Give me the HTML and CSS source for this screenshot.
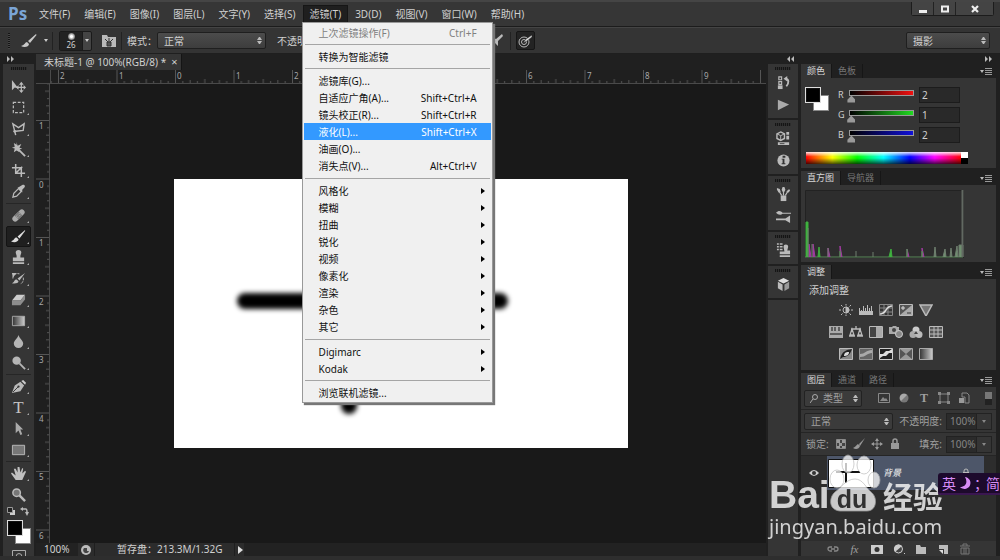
FILE: index.html
```html
<!DOCTYPE html>
<html lang="zh-CN">
<head>
<meta charset="utf-8">
<title>未标题-1 @ 100%(RGB/8)</title>
<link rel="stylesheet" href="styles.css">
</head>
<body>
<div class="app">
  <header class="menubar">
    <span class="logo">Ps</span>
    <nav class="menus">
      <button class="menu-btn">文件(F)</button>
      <button class="menu-btn">编辑(E)</button>
      <button class="menu-btn">图像(I)</button>
      <button class="menu-btn">图层(L)</button>
      <button class="menu-btn">文字(Y)</button>
      <button class="menu-btn">选择(S)</button>
      <div class="menu-anchor">
        <button class="menu-btn open">滤镜(T)</button>
        <div class="menu" role="menu">
          <button class="item off" disabled><span>上次滤镜操作(F)</span><span>Ctrl+F</span></button>
          <hr>
          <button class="item"><span>转换为智能滤镜</span></button>
          <hr>
          <button class="item"><span>滤镜库(G)...</span></button>
          <button class="item"><span>自适应广角(A)...</span><span>Shift+Ctrl+A</span></button>
          <button class="item"><span>镜头校正(R)...</span><span>Shift+Ctrl+R</span></button>
          <button class="item active"><span>液化(L)...</span><span>Shift+Ctrl+X</span></button>
          <button class="item"><span>油画(O)...</span></button>
          <button class="item"><span>消失点(V)...</span><span>Alt+Ctrl+V</span></button>
          <hr class="wide">
          <button class="item sub"><span>风格化</span></button>
          <button class="item sub"><span>模糊</span></button>
          <button class="item sub"><span>扭曲</span></button>
          <button class="item sub"><span>锐化</span></button>
          <button class="item sub"><span>视频</span></button>
          <button class="item sub"><span>像素化</span></button>
          <button class="item sub"><span>渲染</span></button>
          <button class="item sub"><span>杂色</span></button>
          <button class="item sub"><span>其它</span></button>
          <hr class="wide">
          <button class="item sub"><span>Digimarc</span></button>
          <button class="item sub"><span>Kodak</span></button>
          <hr>
          <button class="item"><span>浏览联机滤镜...</span></button>
        </div>
      </div>
      <button class="menu-btn">3D(D)</button>
      <button class="menu-btn">视图(V)</button>
      <button class="menu-btn">窗口(W)</button>
      <button class="menu-btn">帮助(H)</button>
    </nav>
    <div class="window-btns">
      <button aria-label="最小化"><svg width="10" height="10"><path d="M1 6h8v3H1z" fill="#eee"/></svg></button>
      <button aria-label="最大化"><svg width="10" height="10"><path d="M2 2.500h6v5H2z" fill="none" stroke="#eee" stroke-width="2"/></svg></button>
      <button class="close" aria-label="关闭"><svg width="10" height="10"><path d="M2 2l6 6M8 2L2 8" stroke="#eee" stroke-width="2.200"/></svg></button>
    </div>
  </header>

  <div class="options">
    <i class="vgrip"></i>
    <button class="tool-preset" aria-label="画笔"><svg width="16" height="14" viewBox="0 0 16 14"><path d="M15 0L7 7l2 2 6.500-8zM6 8C4 8 4 11 0 12c3 2 8 1 8-2z" fill="#c8c8c8"/></svg><i class="down"></i></button>
    <i class="vsep"></i>
    <button class="brush-size"><span class="tip"><i></i>26</span><span class="drop"><i class="down"></i></span></button>
    <button class="brush-panel" aria-label="画笔面板"><svg width="14" height="13" viewBox="0 0 14 13"><path d="M0 1h5l1 2h8v10H0z" fill="#b9b9b9"/><path d="M3 5l3 3M7 4v4M11 5L8 8M5 8h4v4H5z" stroke="#333" fill="#555"/></svg></button>
    <i class="vsep"></i>
    <label for="mode">模式：</label>
    <span class="select mode"><select id="mode"><option>正常</option></select><i class="updown"></i></span>
    <label class="opacity" for="opacity">不透明度：</label>
    <input class="opt-num" id="opacity" value="100%">
    <label for="flow">流量：</label>
    <input class="opt-num" id="flow" value="100%">
    <button class="air" aria-label="喷枪"><svg width="15" height="14" viewBox="0 0 15 14"><path d="M14 0L8 5 3 3l3 4-5 6 6-4 3 3 0-5 5-5z" fill="#bbb"/></svg></button>
    <i class="vsep"></i>
    <button class="pressure" aria-label="压力控制大小"><svg width="15" height="14" viewBox="0 0 15 14"><g fill="none" stroke="#bbb"><circle cx="6" cy="8" r="5"/><circle cx="6" cy="8" r="2.500"/></g><path d="M14 1L8 5 5 9l4-2 5-4z" fill="#ddd" stroke="#222" stroke-width=".5"/></svg></button>
    <span class="select workspace"><select aria-label="工作区"><option>摄影</option></select><i class="updown"></i></span>
  </div>

  <main class="body">
    <aside class="toolbar">
      <div class="collapse"><svg width="7" height="6"><path d="M0 0l3 3-3 3zM4 0l3 3-3 3z" fill="#bbb"/></svg></div>
      <i class="grip"></i>
      <div class="tools">
        <button class="tool" aria-label="移动"><svg viewBox="0 0 16 16"><path d="M1 1v11l3-3 4 1z" fill="#bbb"/><path d="M11 5v8M7 9h8" stroke="#bbb" stroke-width="1.300"/><path d="M11 3l2.500 3h-5zM11 15l2.500-3h-5zM5.500 9L8 6.500v5zM16 9l-2.500-2.500v5z" fill="#bbb"/></svg></button>
        <button class="tool more" aria-label="矩形选框"><svg viewBox="0 0 16 16"><path d="M2.500 2.500h11v11h-11z" fill="none" stroke="#bbb" stroke-width="1.300" stroke-dasharray="3 1.700"/></svg></button>
        <button class="tool more" aria-label="套索"><svg viewBox="0 0 16 16"><path d="M5 15l-1-4-2-8 6 4 6-4-1 7-8 1" fill="none" stroke="#bbb" stroke-width="1.500"/><circle cx="4" cy="11" r="1.500" fill="#bbb"/></svg></button>
        <button class="tool more" aria-label="魔棒"><svg viewBox="0 0 16 16"><path d="M6 6l9 9" stroke="#bbb" stroke-width="2"/><path d="M6 0l1 4 4-2-2 4 3 1-3 1 0 3-3-2-3 2 1-4-3-1 3-1-1-4 3 2z" fill="#bbb"/></svg></button>
        <button class="tool more" aria-label="裁剪"><svg viewBox="0 0 16 16"><path d="M5 1v10h10M1 5h10v10M5 11l7-7" fill="none" stroke="#bbb" stroke-width="1.600"/></svg></button>
        <button class="tool more" aria-label="吸管"><svg viewBox="0 0 16 16"><path d="M2 14l1-4 5-5 3 3-5 5z" fill="none" stroke="#bbb" stroke-width="1.300"/><path d="M7 4l2-1 3-2c2-1 4 1 2 3l-2 2v3z" fill="#bbb"/></svg></button>
        <i class="tool-sep"></i>
        <button class="tool more" aria-label="修复画笔"><svg viewBox="0 0 16 16"><g transform="rotate(-45 8 8)"><rect x="0" y="5" width="16" height="6" rx="3" fill="#aaa"/><rect x="5" y="5" width="6" height="6" fill="#777"/><path d="M6 7h1M9 7h1M6 9h1M9 9h1" stroke="#ddd"/></g></svg></button>
        <button class="tool more current" aria-label="画笔"><svg viewBox="0 0 16 16"><path d="M15 1L7 8l2 2 6-8zM6 9c-3 0-2 3-6 4 3 2 8 1 8-2z" fill="#ddd"/></svg></button>
        <button class="tool more" aria-label="仿制图章"><svg viewBox="0 0 16 16"><path d="M6 6L5 3a3 3 0 0 1 6 0l-1 3v2h4v4H2V8h4zM2 13h12v2H2z" fill="#bbb"/></svg></button>
        <button class="tool more" aria-label="历史记录画笔"><svg viewBox="0 0 16 16"><path d="M15 2L7 8l2 2zM6 9c-3 0-2 3-5 4 3 1 7 0 7-2z" fill="#bbb"/><path d="M2 8c0-4 3-6 7-5M13 7c1 3-1 6-3 7" fill="none" stroke="#bbb" stroke-dasharray="3 1"/><path d="M1 2h5L2 7z" fill="#bbb"/></svg></button>
        <button class="tool more" aria-label="橡皮擦"><svg viewBox="0 0 16 16"><path d="M1 9l5-6h9l-5 6z" fill="#ccc"/><path d="M1 9h9v5H1zM10 9l5-6v5l-5 6z" fill="#8d8d8d"/></svg></button>
        <button class="tool more" aria-label="渐变"><svg viewBox="0 0 16 16"><defs><linearGradient id="gr"><stop stop-color="#333"/><stop offset="1" stop-color="#ccc"/></linearGradient></defs><path d="M1.500 3.500h13v10h-13z" fill="url(#gr)" stroke="#aaa"/></svg></button>
        <button class="tool more" aria-label="模糊"><svg viewBox="0 0 16 16"><path d="M8 1c1 4 5 6 5 9a5 5 0 0 1-10 0c0-3 4-5 5-9z" fill="#b5b5b5"/></svg></button>
        <button class="tool more" aria-label="减淡"><svg viewBox="0 0 16 16"><circle cx="6" cy="6" r="4.500" fill="#b5b5b5"/><path d="M9 9l6 6" stroke="#b5b5b5" stroke-width="2"/></svg></button>
        <i class="tool-sep"></i>
        <button class="tool more" aria-label="钢笔"><svg viewBox="0 0 16 16"><path d="M1 15L4 7l6-4 4 4-4 6z" fill="#b9b9b9"/><path d="M11 2l2-1 3 3-1 2z" fill="#ccc"/><path d="M2 14l6-6" stroke="#333"/><circle cx="8" cy="8" r="1.200" fill="#333"/></svg></button>
        <button class="tool more type" aria-label="横排文字">T</button>
        <button class="tool more" aria-label="路径选择"><svg viewBox="0 0 16 16"><path d="M5 1v12l3-3 2 5 2-1-2-5h3z" fill="#aaa"/></svg></button>
        <button class="tool more" aria-label="矩形"><svg viewBox="0 0 16 16"><path d="M1.500 3.500h13v10h-13z" fill="#777" stroke="#bbb"/></svg></button>
        <i class="tool-sep"></i>
        <button class="tool more" aria-label="抓手"><svg viewBox="0 0 16 16"><path d="M5 15L0 8l1-1 4 3-2-7 2 0 2 4V1h2l1 6 2-5 1 1-1 5 3-3 1 1-4 9z" fill="#c0c0c0"/></svg></button>
        <button class="tool" aria-label="缩放"><svg viewBox="0 0 16 16"><circle cx="6" cy="6" r="4" fill="#777" stroke="#bbb" stroke-width="1.600"/><path d="M9 9l6 6" stroke="#bbb" stroke-width="2.600"/></svg></button>
      </div>
      <div class="swap"><svg width="9" height="9"><path d="M3 3h5v5H3z" fill="#ccc"/><path d="M.5.5h5v5h-5z" fill="#222" stroke="#999"/></svg><svg width="9" height="9"><path d="M2 2h4q1 0 1 4" fill="none" stroke="#bbb" stroke-width="1.500"/><path d="M3 0v4L0 2zM5 5h4L7 9z" fill="#bbb"/></svg></div>
      <div class="swatches"><i></i><i></i></div>
      <button class="quickmask" aria-label="快速蒙版"><svg width="14" height="7"><path d="M.5 7V.5h13V7" fill="none" stroke="#aaa"/><path d="M4 7a3 3.500 0 0 1 6 0" fill="none" stroke="#aaa"/></svg></button>
    </aside>

    <section class="document">
      <div class="doc-tabs"><div class="doc-tab"><span>未标题-1 @ 100%(RGB/8) *</span><button aria-label="关闭文档">×</button></div></div>
      <svg class="hruler" height="14" width="100%">
        <defs>
          <pattern id="ht" x="22" width="58.500" height="14" patternUnits="userSpaceOnUse"><path d="M.5 0v14M7.800 11v3M15.100 10v4M22.400 11v3M29.800 9v5M37.100 11v3M44.400 10v4M51.700 11v3" stroke="#555"/></pattern>
          <pattern id="vt" y="36" width="14" height="58.500" patternUnits="userSpaceOnUse"><path d="M0 .5h14M11 7.800h3M10 15.100h4M11 22.400h3M9 29.800h5M11 37.100h3M10 44.400h4M11 51.700h3" stroke="#555"/></pattern>
        </defs>
        <rect x="14" width="100%" height="14" fill="url(#ht)"/>
        <path d="M0 13.500h2000M14.500 0v14" stroke="#4a4a4a"/>
        <g class="nums"><text x="24" y="9">2</text><text x="83" y="9">1</text><text x="141" y="9">0</text><text x="200" y="9">1</text><text x="258" y="9">2</text><text x="317" y="9">3</text><text x="375" y="9">4</text><text x="434" y="9">5</text><text x="492" y="9">6</text><text x="551" y="9">7</text><text x="609" y="9">8</text><text x="668" y="9">9</text></g>
      </svg>
      <div class="workarea">
        <svg class="vruler" width="14" height="100%">
          <rect width="14" height="100%" fill="url(#vt)"/><path d="M13.500 0v2000" stroke="#4a4a4a"/>
          <g class="nums"><text x="3" y="45">1</text><text x="3" y="104">0</text><text x="3" y="162">1</text><text x="3" y="221">2</text><text x="3" y="279">3</text><text x="3" y="338">4</text><text x="3" y="396">5</text><text x="3" y="455">6</text></g>
        </svg>
        <div class="pasteboard">
          <svg class="artboard" width="454" height="269" viewBox="0 0 454 269">
            <defs><filter id="soft" x="-20%" y="-20%" width="140%" height="140%" filterUnits="userSpaceOnUse"><feGaussianBlur stdDeviation="2.500"/></filter></defs>
            <path d="M71 122H326M175 60V227" fill="none" stroke="#000" stroke-width="16" stroke-linecap="round" filter="url(#soft)"/>
          </svg>
        </div>
      </div>
      <footer class="status">
        <span class="zoom">100%</span>
        <span class="sync"><svg width="10" height="10"><circle cx="5" cy="5" r="5" fill="#bbb"/><path d="M3 3h3v3h2a3 3 0 1 1-5-3z" fill="#444"/></svg></span>
        <span class="scratch">暂存盘：213.3M/1.32G</span>
        <button class="status-more" aria-label="更多"><svg width="5" height="8"><path d="M0 0l5 4-5 4z" fill="#ddd"/></svg></button>
      </footer>
    </section>

    <aside class="dock">
      <div class="collapse end"><svg width="7" height="6"><path d="M3 0L0 3l3 3zM7 0L4 3l3 3z" fill="#bbb"/></svg></div>
      <div class="dock-group"><i class="grip"></i>
        <button aria-label="历史记录"><svg viewBox="0 0 16 16"><path d="M3 2h3v3H3zM3 7h3v3H3z" fill="none" stroke="#bbb" stroke-width="1.200"/><path d="M2 11h5v4H2z" fill="#bbb"/><path d="M10 4c4 0 4 5 1 8" fill="none" stroke="#bbb" stroke-width="2"/><path d="M8 4l4-3v6z" fill="#bbb"/></svg></button>
        <button aria-label="动作"><svg viewBox="0 0 16 16"><path d="M2 3l12 5-12 6z" fill="#aaa"/></svg></button>
      </div>
      <div class="dock-group"><i class="grip"></i>
        <button aria-label="属性"><svg viewBox="0 0 16 16"><path d="M5 1l4 2v5l-4 2-4-2V3z" fill="none" stroke="#bbb" stroke-width="1.500"/><path d="M1 3l4 2 4-2M5 5v5" fill="none" stroke="#bbb"/><path d="M11 1h3v3h-3zM11 5h3v4h-3zM2 12h12v3H2z" fill="#bbb"/><path d="M4 13h5v1H4z" fill="#444"/></svg></button>
        <button aria-label="信息"><svg viewBox="0 0 16 16"><circle cx="8" cy="8" r="6.500" fill="#bbb"/><path d="M7 3h3v2H7zM6 6h3v5h1v1H6v-1h1V7H6z" fill="#333"/></svg></button>
      </div>
      <div class="dock-group"><i class="grip"></i>
        <button aria-label="画笔"><svg viewBox="0 0 16 16"><path d="M5 9h6v6H5z" fill="#bbb"/><path d="M6 9L3 4M8 9V3M10 9l3-5" stroke="#bbb" stroke-width="1.300"/><path d="M1 1l3 1 1 3-2 1-2-3zM7 0h2l1 3-1 2H7L6 3zM14 2l1 2-2 2-2-1z" fill="#bbb"/></svg></button>
        <button aria-label="画笔预设"><svg viewBox="0 0 16 16"><path d="M0 4c3-3 5-2 7 0h9v1H7c-2 2-5 1-7-1zM0 10h10l5-3v8l-5-3H0z" fill="#bbb"/></svg></button>
      </div>
      <div class="dock-group"><i class="grip"></i>
        <button aria-label="仿制源"><svg viewBox="0 0 16 16"><path d="M1 1h2M4 1h3M1 4h2M4 4h3M1 7h2M4 7h3" stroke="#bbb" stroke-width="1.500"/><path d="M8 4a2 2 0 0 1 5 0l-1 4h3v4H4V9h5zM4 13h11v2H4z" fill="#bbb"/></svg></button>
      </div>
      <div class="dock-group"><i class="grip"></i>
        <button aria-label="3D"><svg viewBox="0 0 16 16"><path d="M8 1l6 3-6 3-6-3z" fill="#ddd"/><path d="M2 5l5 3v7l-5-3z" fill="#bbb"/><path d="M14 5L9 8v7l5-3z" fill="#999"/></svg></button>
      </div>
    </aside>

    <aside class="panels">
      <div class="collapse end"><svg width="7" height="6"><path d="M0 0l3 3-3 3zM4 0l3 3-3 3z" fill="#bbb"/></svg></div>
      <section class="panel color">
        <div class="tabs"><button class="tab on">颜色</button><button class="tab">色板</button><i class="panel-menu"></i></div>
        <div class="color-body">
          <div class="swatches"><i></i><i></i></div>
          <div class="channels">
            <div class="channel"><label for="r">R</label><input class="range red" id="r" type="range" max="255" value="2"><input class="num" aria-label="R 值" value="2"></div>
            <div class="channel"><label for="g">G</label><input class="range green" id="g" type="range" max="255" value="1"><input class="num" aria-label="G 值" value="1"></div>
            <div class="channel"><label for="b">B</label><input class="range blue" id="b" type="range" max="255" value="2"><input class="num" aria-label="B 值" value="2"></div>
          </div>
        </div>
        <div class="spectrum"><i class="hues"></i><i class="bw"></i></div>
      </section>

      <section class="panel histogram">
        <div class="tabs"><button class="tab on">直方图</button><button class="tab">导航器</button><i class="panel-menu"></i></div>
        <svg class="graph" width="159" height="68" viewBox="0 0 159 68">
          <path d="M.5.5h158v67H.5z" fill="#2d2d2d" stroke="#222"/>
          <path d="M0 67h158" stroke="#5b8a5b"/>
          <path d="M4 67V54l2 13M8 67V54l2 13M23 67V58l2 9M35 67V56l2 11M102 67V59l2 8M117 67V58l2 9" fill="#a03ba0" stroke="#a03ba0"/>
          <path d="M1 67V32h2v35M13 67l1-10 1 10M35 67v-6M84 67l2-8 1 8M102 67v-8M117 67v-6" fill="#3fb53f" stroke="#3fae3f"/>
          <path d="M3 67V38M7 67V54M23 67V58M51 67V61M68 67V62M129 67l1-10 1 10M138 67l2-8 1 8M145 67l1-9 1 9M150 67l2-11 1 11M154 67V55h4v12" fill="#6f8f6f" stroke="#6f7f6f"/>
          <path d="M157.500 0v67" stroke="#626962" stroke-width="2"/>
        </svg>
      </section>

      <section class="panel adjust">
        <div class="tabs"><button class="tab on">调整</button><i class="panel-menu"></i></div>
        <p>添加调整</p>
        <div class="adj-rows">
          <div class="adj-row">
            <svg viewBox="0 0 14 12"><circle cx="7" cy="6" r="3" fill="none" stroke="#bbb"/><path d="M7 3a3 3 0 0 1 0 6zM7 0v1.500M7 10.500V12M0 6h2M12 6h2M2 1l1.500 1.500M12 1l-1.500 1.500M2 11l1.500-1.500M12 11l-1.500-1.500" fill="#bbb" stroke="#bbb"/></svg>
            <svg viewBox="0 0 14 12"><path d="M0 7h14v4H0z" fill="#bbb"/><path d="M.5 4v4M2.500 6v2M4.500 2v6M6.500 4v4M8.500 1v7M10.500 4v4M12.500 2v6" stroke="#bbb"/></svg>
            <svg viewBox="0 0 14 12"><path d="M.5.5h13v11H.5zM5 1v10M9 1v10M1 4h12M1 8h12" fill="none" stroke="#888"/><path d="M1 10c7 0 5-8 12-8" fill="none" stroke="#ddd" stroke-width="1.500"/></svg>
            <svg viewBox="0 0 14 12"><path d="M.5.5h13v11H.5z" fill="#555" stroke="#bbb"/><path d="M1 11L13 1v10z" fill="#aaa"/><path d="M2 4h4M4 2v4" stroke="#ddd"/><path d="M8 9h4" stroke="#333"/></svg>
            <svg viewBox="0 0 14 12"><path d="M1 1h12L7 12z" fill="#777" stroke="#bbb" stroke-width="1.500"/></svg>
          </div>
          <div class="adj-row">
            <svg viewBox="0 0 14 12"><path d="M0 0h14v12H0z" fill="#aaa"/><path d="M3 1v4M6 1v4M10 1v4M1 8h12" stroke="#444" stroke-width="1.500"/></svg>
            <svg viewBox="0 0 14 12"><path d="M7 0v3M2 3h10M3 3L1 9h4zM11 3L9 9h4zM0 10h6M8 10h6" fill="none" stroke="#bbb" stroke-width="1.300"/></svg>
            <svg viewBox="0 0 14 12"><path d="M.5.5h13v11H.5z" fill="#444" stroke="#bbb"/><path d="M7 1h6v10H7z" fill="#aaa"/></svg>
            <svg viewBox="0 0 14 12"><path d="M0 1h3l1-1h3l1 1h2v7H0z" fill="#aaa"/><circle cx="5" cy="4" r="2" fill="#444"/><circle cx="10" cy="8" r="3.500" fill="#888" stroke="#ccc"/></svg>
            <svg viewBox="0 0 14 12"><circle cx="7" cy="4" r="3.500" fill="#ccc"/><circle cx="4" cy="8.500" r="3.500" fill="#aaa"/><circle cx="10" cy="8.500" r="3.500" fill="#bbb"/><path d="M7 5l2 3H5z" fill="#444"/></svg>
            <svg viewBox="0 0 14 12"><path d="M.5.5h13v11H.5zM5 0v12M9 0v12M0 4h14M0 8h14" fill="#555" stroke="#bbb"/></svg>
          </div>
          <div class="adj-row">
            <svg viewBox="0 0 14 12"><path d="M.5.5h13v11H.5z" fill="#888" stroke="#bbb"/><path d="M1 11c2-8 6-9 12-10C11 7 8 9 4 9z" fill="#222"/><path d="M5 8c0-4 3-4 5-4 0 3-2 4-5 4z" fill="#ddd"/></svg>
            <svg viewBox="0 0 14 12"><path d="M.5.5h13v11H.5z" fill="#666" stroke="#999"/><path d="M1 6c5 0 6-4 12-4v3C8 5 7 9 1 9z" fill="#aaa"/></svg>
            <svg viewBox="0 0 14 12"><path d="M.5.5h13v11H.5z" fill="#222" stroke="#ccc"/><path d="M1 6h3l3-3h3l3-2v4h-3L7 8H4l-3 2z" fill="#ddd"/></svg>
            <svg viewBox="0 0 14 12"><path d="M.5.5h13v11H.5z" fill="#555" stroke="#aaa"/><path d="M1 1l6 5 6-5zM1 11l6-5 6 5z" fill="#999"/></svg>
            <svg viewBox="0 0 14 12"><path d="M.5.5h13v11H.5z" fill="url(#gr)" stroke="#aaa"/></svg>
          </div>
        </div>
      </section>

      <section class="panel layers">
        <div class="tabs"><button class="tab on">图层</button><button class="tab">通道</button><button class="tab">路径</button><i class="panel-menu"></i></div>
        <div class="layer-row filter">
          <span class="select kind"><svg width="8" height="9"><circle cx="5" cy="3" r="2.500" fill="none" stroke="#aaa"/><path d="M3 5L0 9" stroke="#aaa"/></svg><select aria-label="类型"><option>类型</option></select><i class="updown"></i></span>
          <div class="filter-icons">
            <svg viewBox="0 0 12 12"><path d="M.5 1.500h11v9H.5z" fill="none" stroke="#888"/><path d="M2 9l3-4 2 2 1-1 2 3z" fill="#888"/></svg>
            <svg viewBox="0 0 12 12"><circle cx="6" cy="6" r="4.500" fill="#777"/><path d="M3 9a4 4 0 0 1 6-6z" fill="#aaa"/></svg>
            <span class="tee">T</span>
            <svg viewBox="0 0 12 12"><path d="M2 2h8v8H2z" fill="none" stroke="#888"/><path d="M0 0h3v3H0zM9 0h3v3H9zM0 9h3v3H0zM9 9h3v3H9z" fill="#888"/></svg>
            <svg viewBox="0 0 12 12"><path d="M4 1h5l2 2v8H7V5H4z" fill="none" stroke="#888"/><path d="M1 6h5v5H1z" fill="#999"/></svg>
          </div>
          <i class="toggle"></i>
        </div>
        <div class="layer-row blend">
          <span class="select"><select aria-label="混合模式"><option>正常</option></select><i class="updown"></i></span>
          <label for="lo">不透明度:</label>
          <span class="combo"><input id="lo" value="100%"><button aria-label="不透明度选项"><i class="down"></i></button></span>
        </div>
        <div class="layer-row lock">
          <span>锁定:</span>
          <div class="lock-icons">
            <svg viewBox="0 0 12 12"><path d="M1.500 1.500h9v9h-9z" fill="#444" stroke="#888"/><path d="M2 2h3v3H2zM7 2h3v3H7zM4 5h3v3H4zM2 8h3v2H2zM7 8h3v2H7z" fill="#999"/></svg>
            <svg viewBox="0 0 12 12"><path d="M12 0L6 6l1 2zM5 6C3 7 3 9 0 10c3 2 6 1 7-2z" fill="#999"/></svg>
            <svg viewBox="0 0 12 12"><path d="M6 1v10M1 6h10" stroke="#999"/><path d="M6 0l2 3H4zM6 12l2-3H4zM0 6l3-2v4zM12 6L9 4v4z" fill="#999"/></svg>
            <svg viewBox="0 0 12 12"><path d="M2 5h8v6H2z" fill="#999"/><path d="M4 5V3a2 2 0 0 1 4 0v2" fill="none" stroke="#999" stroke-width="1.500"/></svg>
          </div>
          <label for="fill">填充:</label>
          <span class="combo"><input id="fill" value="100%"><button aria-label="填充选项"><i class="down"></i></button></span>
        </div>
        <div class="layer-list">
          <div class="layer">
            <button class="eye" aria-label="可见性"><svg width="10" height="8"><path d="M0 4q5-6 10 0-5 6-10 0z" fill="#ccc"/><circle cx="5" cy="4" r="2" fill="#333"/></svg></button>
            <div class="layer-main">
              <svg class="thumb" width="46" height="29" viewBox="0 0 46 29"><path d="M.5.500h45v28H.5z" fill="#fff" stroke="#111"/><path d="M8 13h24M18 4v20" stroke="#111" stroke-width="2"/></svg>
              <span class="layer-name">背景</span>
              <svg width="8" height="10"><path d="M1 4h6v5H1z" fill="#bbb"/><path d="M2 4V3a2 2 0 0 1 4 0v1" fill="none" stroke="#bbb"/></svg>
            </div>
          </div>
        </div>
        <footer class="layer-actions">
          <button aria-label="链接图层"><svg viewBox="0 0 12 12"><path d="M5 8H3a2 2 0 0 1 0-4h2M7 4h2a2 2 0 0 1 0 4H7M4 6h4" fill="none" stroke="#888" stroke-width="1.300"/></svg></button>
          <button class="fx" aria-label="图层样式">fx</button>
          <button aria-label="添加蒙版"><svg viewBox="0 0 12 12"><path d="M0 2h12v9H0z" fill="#ccc"/><circle cx="6" cy="6.500" r="2.500" fill="#333"/></svg></button>
          <button aria-label="新建调整图层"><svg viewBox="0 0 12 12"><circle cx="5.500" cy="6" r="4" fill="#444" stroke="#ccc"/><path d="M2 9a4 4 0 0 1 7-6zM11 10h1v1h-1z" fill="#ccc"/></svg></button>
          <button aria-label="新建组"><svg viewBox="0 0 12 12"><path d="M1 2h4l1 2h5v7H1z" fill="#bbb"/></svg></button>
          <button aria-label="新建图层"><svg viewBox="0 0 12 12"><path d="M2 2h9v9H7V6H2z" fill="#bbb"/><path d="M2 7h4v4z" fill="#ddd"/></svg></button>
          <button aria-label="删除图层"><svg viewBox="0 0 12 12"><path d="M1 3h10M4 3V1h4v2M2 5h8v6H2zM5 5v6M7 5v6" fill="none" stroke="#777"/></svg></button>
        </footer>
      </section>
    </aside>
  </main>

  <div class="watermark">
    <div class="brand">
      <span class="latin">Bai</span>
      <span class="paw"><svg width="52" height="58" viewBox="0 0 52 58"><g fill="#fff" fill-opacity=".96" stroke="#b4b4b4" stroke-width=".8"><path d="M24 25c8 0 11 9 16 13 7 5 6 19-4 19H9C-3 56-2 43 4 38c6-4 11-13 20-13z"/><ellipse cx="6" cy="25" rx="7" ry="9"/><ellipse cx="17" cy="10" rx="6" ry="9"/><ellipse cx="33" cy="11" rx="7" ry="9"/><ellipse cx="43" cy="26" rx="6" ry="8"/></g></svg><b>du</b></span>
      <span class="han">经验</span>
    </div>
    <a href="#">jingyan.baidu.com</a>
  </div>
  <div class="ime"><span>英</span><svg width="12" height="14"><path d="M6 1a6 6 0 1 1-5 10c6 0 8-5 5-10z" fill="#d78cf5"/></svg><span>；</span><span>简</span></div>
</div>
</body>
</html>
```

FILE: styles.css
```css
* { box-sizing: border-box; }
html, body { height: 100%; }
body {
  margin: 0;
  overflow: hidden;
  background: #2a2a2a;
  color: #d0d0d0;
  font: 10px/14px "Noto Sans", "Noto Sans CJK SC", sans-serif;
}
button, input, select { font: inherit; color: inherit; }
button { margin: 0; padding: 0; border: 0; background: none; white-space: nowrap; }
svg { display: block; flex: none; }
i { display: block; flex: none; }

.app {
  position: relative;
  display: flex;
  flex-direction: column;
  height: 100vh;
  background: #2e2e2e;
}

/* menu bar */
.menubar {
  display: flex;
  align-items: center;
  height: 27px;
  padding: 0 6px 0 8px;
  background: #363636;
  border-top: 2px solid #454545;
  border-bottom: 1px solid #1c1c1c;
}
.logo { width: 24px; color: #7aa5d6; font: bold 17px/20px "Open Sans", sans-serif; }
.menus { display: flex; flex: 1; align-self: stretch; align-items: center; }
.menu-btn { height: 18px; padding: 0 6px; border: 1px solid transparent; }
.menu-btn.open { background: #1f1f1f; border-color: #161616; }
.menu-anchor { position: relative; }
.menu {
  position: absolute;
  z-index: 5;
  left: -1px;
  top: 17px;
  width: 191px;
  padding: 1px;
  background: #f0f0f0;
  border: 1px solid #999;
  box-shadow: 2px 2px 1px #777;
  color: #111;
}
.item {
  display: flex;
  justify-content: space-between;
  align-items: center;
  width: 100%;
  height: 17px;
  padding: 0 14px 0 15px;
}
.item.off { color: #808080; }
.item.active { background: #3399ff; color: #fff; }
.item.sub { padding-right: 6px; }
.item.sub::after {
  content: "";
  border: 3px solid transparent;
  border-left: 4px solid #000;
  border-right: 0;
}
.menu hr { height: 1px; margin: 3px 1px; border: 0; background: #a5a5a5; }
.menu hr.wide { margin: 4px 1px 3px; }

.window-btns {
  display: flex;
  align-self: flex-start;
  height: 14px;
  border: 1px solid #1c1c1c;
  border-top: 0;
  border-radius: 0 0 3px 3px;
}
.window-btns button { display: grid; place-items: center; width: 22px; background: #444; border-right: 1px solid #222; }
.window-btns .close { width: 37px; border-right: 0; }

/* options bar */
.options {
  display: flex;
  align-items: center;
  height: 27px;
  padding: 0 10px 0 8px;
  background: #343434;
  border-top: 1px solid #444;
  border-bottom: 1px solid #1f1f1f;
  white-space: nowrap;
}
.vgrip { width: 2px; height: 16px; margin-right: 11px; background: repeating-linear-gradient(#151515 0 1px, #444 1px 2px); }
.vsep { width: 1px; height: 18px; background: #222; }
.down { border: 2px solid transparent; border-top: 3px solid #ccc; border-bottom: 0; }
.tool-preset { display: flex; align-items: center; gap: 7px; margin-right: 4px; }
.brush-size { display: flex; height: 20px; margin: 0 10px 0 6px; border: 1px solid #1a1a1a; border-radius: 2px; background: #444; }
.tip { display: flex; flex-direction: column; align-items: center; width: 22px; background: #222; font-size: 8px; line-height: 10px; }
.tip i { width: 7px; height: 7px; margin-top: 1px; border-radius: 50%; background: radial-gradient(#fff 20%, #222); }
.drop { display: grid; place-items: center; width: 9px; border-left: 1px solid #1a1a1a; }
.brush-panel { margin-right: 5px; }
.options label { margin-left: 5px; }
.select {
  position: relative;
  display: flex;
  align-items: center;
  height: 17px;
  background: linear-gradient(#4c4c4c, #3d3d3d);
  border: 1px solid #1f1f1f;
  border-radius: 2px;
}
.select select { flex: 1; min-width: 0; padding: 0 16px 0 6px; appearance: none; border: 0; background: none; }
.updown { position: absolute; right: 3px; width: 5px; height: 7px; pointer-events: none; }
.updown::before, .updown::after { content: ""; display: block; border: 2px solid transparent; }
.updown::before { border-top: 0; border-bottom: 3px solid #bbb; margin-bottom: 1px; }
.updown::after { border-bottom: 0; border-top: 3px solid #bbb; }
.mode { width: 109px; }
.options .opacity { margin-left: 11px; }
.opt-num { width: 56px; height: 17px; border: 1px solid #1f1f1f; background: #262626; }
.air { margin: 0 7px 0 auto; }
.pressure { display: grid; place-items: center; width: 19px; height: 19px; margin-left: 5px; border: 1px solid #161616; border-radius: 2px; background: #232323; }
.workspace { width: 84px; margin-left: 371px; }

/* body */
.body {
  display: flex;
  flex: 1;
  min-height: 0;
  padding: 0 4px 0 3px;
  margin-bottom: 4px;
  background: #202020;
}
.collapse { display: flex; align-items: center; flex: none; height: 10px; padding: 0 4px; background: #202020; }
.collapse.end { justify-content: flex-end; }
.grip { width: 16px; height: 3px; margin: 3px auto 0; background: repeating-linear-gradient(90deg, #151515 0 1px, #2d2d2d 1px 2px); }

.toolbar { display: flex; flex-direction: column; flex: none; width: 31px; margin-right: 2px; background: #353535; overflow: hidden; }
.tools { margin-top: 6px; }
.tool { position: relative; display: grid; place-items: center; width: 25px; height: 21px; margin: 0 auto; border: 1px solid transparent; }
.tool svg { width: 15px; height: 15px; }
.tool.more::after { content: ""; position: absolute; right: 1px; bottom: 2px; border: 1px solid; border-color: transparent #aaa #aaa transparent; }
.tool.current { background: #1f1f1f; border-color: #141414; border-radius: 2px; }
.tool.type { font: 17px/19px "Liberation Serif", serif; color: #c4c4c4; }
.tool-sep { height: 1px; margin: 1px 3px; background: #262626; }
.swap { display: flex; justify-content: space-between; margin: 2px 5px 4px 4px; }
.swatches { display: grid; flex: none; grid-template: 8px 8px 8px / 8px 8px 8px; }
.swatches i { background: #fff; border: 1px solid #888; grid-area: 2 / 2 / 4 / 4; }
.swatches i:first-child { z-index: 1; background: #000; border: 1px solid #ddd; outline: 1px solid #111; outline-offset: -2px; grid-area: 1 / 1 / 3 / 3; }
.toolbar .swatches { margin-left: 4px; }
.quickmask { margin: 6px 0 0 9px; }

.document { display: flex; flex-direction: column; flex: 1; min-width: 0; margin-right: 2px; background: #191919; }
.doc-tabs { display: flex; height: 16px; background: #202020; }
.doc-tab { display: flex; align-items: center; gap: 5px; padding: 0 4px 0 8px; background: #353535; border-right: 1px solid #151515; }
.doc-tab button { font-size: 11px; line-height: 12px; }
.hruler, .vruler { background: #1f1f1f; }
.nums text { fill: #a8a8a8; font: 8px "Noto Sans", sans-serif; }
.workarea { display: flex; flex: 1; min-height: 0; }
.pasteboard { display: grid; place-items: center; flex: 1; padding-right: 14px; }
.artboard { background: #fff; }
.status { display: flex; align-items: center; height: 13px; line-height: 13px; background: #222; }
.status > * { height: 13px; background: #2c2c2c; }
.zoom { width: 42px; padding-left: 8px; background: #222; }
.sync { display: grid; place-items: center; width: 17px; border-right: 1px solid #1f1f1f; }
.scratch { width: 139px; padding-left: 22px; white-space: nowrap; }
.status-more { width: 10px; padding-left: 3px; border-left: 1px solid #1f1f1f; }

.dock { flex: none; width: 30px; margin-right: 3px; background: #353535; }
.dock-group { display: grid; justify-items: center; padding-bottom: 3px; border-bottom: 2px solid #202020; }
.dock-group button { display: grid; place-items: center; width: 22px; height: 22px; }
.dock-group svg { width: 15px; height: 15px; }
.dock-group .grip { margin-bottom: 1px; }

/* panels */
.panels { display: flex; flex-direction: column; flex: none; width: 195px; }
.panel { background: #353535; margin-bottom: 3px; }
.tabs { display: flex; height: 14px; background: #202020; font-size: 9px; line-height: 14px; }
.tab { padding: 0 6px; color: #777; border-right: 1px solid #161616; }
.tab.on { background: #353535; color: #d8d8d8; }
.panel-menu { width: 7px; height: 7px; margin: 4px 4px 0 auto; background: repeating-linear-gradient(#999 0 1px, transparent 1px 2px); }
.panel-menu::before { content: ""; display: block; width: 0; margin: 2px 0 0 -5px; border: 2px solid transparent; border-top: 3px solid #bbb; border-bottom: 0; }

.color { padding-bottom: 4px; }
.color-body { display: flex; padding: 9px 36px 0 4px; }
.channels { display: grid; flex: 1; grid-template-columns: minmax(0, 1fr); gap: 4px; min-width: 0; margin-left: 9px; }
.channel { display: flex; align-items: center; }
.channel label { width: 8px; font-size: 9px; }
.range { flex: 1; min-width: 0; height: 16px; margin: 0 5px 0 3px; appearance: none; background: none; }
.range::-webkit-slider-runnable-track { height: 6px; margin-bottom: 5px; border: 1px solid #999; }
.range::-webkit-slider-thumb { appearance: none; width: 8px; height: 7px; margin: 5px 0 0 -3px; background: #999; clip-path: polygon(50% 0, 100% 60%, 100% 100%, 0 100%, 0 60%); }
.red::-webkit-slider-runnable-track { background: linear-gradient(90deg, #000, #f01010); }
.green::-webkit-slider-runnable-track { background: linear-gradient(90deg, #000, #20d820); }
.blue::-webkit-slider-runnable-track { background: linear-gradient(90deg, #000, #1010d8); }
.num { flex: none; width: 41px; height: 16px; padding: 0 2px; border: 1px solid #1c1c1c; background: #292929; }
.spectrum { display: flex; height: 12px; margin: 9px 28px 0 5px; }
.hues { flex: 1; background: linear-gradient(rgba(255,255,255,.9), rgba(255,255,255,0) 40%, rgba(0,0,0,0) 50%, rgba(0,0,0,.7)), linear-gradient(90deg, red, #ff0 17%, #0f0 33%, #0ff 50%, #00f 67%, #f0f 83%, red); }
.bw { width: 7px; background: linear-gradient(#fff 50%, #000 50%); }

.graph { margin: 5px 0 0 4px; }
.histogram { padding-bottom: 4px; }

.adjust p { margin: 4px 8px 7px; }
.adj-rows { display: grid; gap: 10px; padding: 0 25px 10px 0; }
.adj-row { display: flex; justify-content: center; gap: 6px; }
.adj-row svg { width: 14px; height: 12px; }

.layers { display: flex; flex-direction: column; flex: 1; min-height: 0; margin-bottom: 0; color: #a0a0a0; }
.layer-row { display: flex; align-items: center; flex: none; height: 23px; padding: 0 4px 0 3px; border-bottom: 1px solid #252525; }
.layer-row .select { background: #3b3b3b; border-color: #222; }
.layer-row .down { border-top-color: #888; }
.kind { width: 58px; padding-left: 5px; }
.kind select { padding: 0 12px 0 5px; }
.filter-icons { display: flex; gap: 8px; margin-left: 16px; }
.filter-icons svg, .lock-icons svg, .layer-actions svg { width: 12px; height: 12px; }
.tee { width: 12px; text-align: center; font: bold 12px/12px "Liberation Serif", serif; }
.toggle { width: 7px; height: 13px; margin-left: auto; background: linear-gradient(#777 50%, #222 50%); }
.blend .select { flex: 1; margin-right: 6px; }
.combo { display: flex; width: 46px; height: 17px; margin-left: 4px; border: 1px solid #222; color: #858585; }
.combo input { flex: 1; min-width: 0; padding: 0 0 0 3px; border: 0; background: #2b2b2b; }
.combo button { display: grid; place-items: center; width: 15px; border-left: 1px solid #222; }
.lock { padding-left: 5px; }
.lock-icons { display: flex; flex: 1; gap: 6px; margin-left: 6px; }
.layer-list { flex: 1; min-height: 0; padding-right: 12px; background: #2d2d2d; }
.layer { display: flex; height: 34px; }
.eye { display: grid; place-items: center; width: 26px; }
.layer-main { display: flex; flex: 1; align-items: center; padding: 0 14px 0 1px; background: #4d5669; }
.layer-name { flex: 1; margin-left: 9px; font-size: 9px; font-style: italic; color: #eee; }
.layer-actions { display: flex; justify-content: center; align-items: center; gap: 10px; height: 15px; }
.layer-actions .fx { width: 12px; font: italic 11px/12px "Liberation Serif", serif; }

/* overlays */
.watermark { position: absolute; z-index: 6; right: 57px; bottom: 20px; color: #fff; opacity: .78; }
.brand { display: flex; align-items: flex-end; height: 58px; }
.latin { width: 62px; font: bold 39px/39px "Liberation Sans", sans-serif; }
.paw { position: relative; width: 52px; }
.paw svg { margin-bottom: 2px; overflow: visible; }
.paw b { position: absolute; right: 10px; bottom: 2px; left: 0; text-align: center; color: #333; font: bold 25px/26px "Liberation Sans", sans-serif; }
.han { font: bold 30px/38px "Noto Sans CJK SC", sans-serif; }
.watermark a { display: block; color: inherit; text-decoration: none; font: 20px/26px "Noto Sans", sans-serif; }
.ime {
  position: absolute;
  z-index: 7;
  right: 0;
  bottom: 65px;
  display: flex;
  align-items: center;
  width: 62px;
  height: 22px;
  padding-left: 4px;
  overflow: hidden;
  gap: 3px;
  background: #1d0a2c;
  border-bottom: 2px solid #3a1650;
  border-radius: 3px 0 0 3px;
  color: #d78cf5;
  font: 14px/20px "Noto Sans CJK SC", sans-serif;
}
.ime span { flex: none; }
.ime span:nth-of-type(2) { width: 9px; }
```
